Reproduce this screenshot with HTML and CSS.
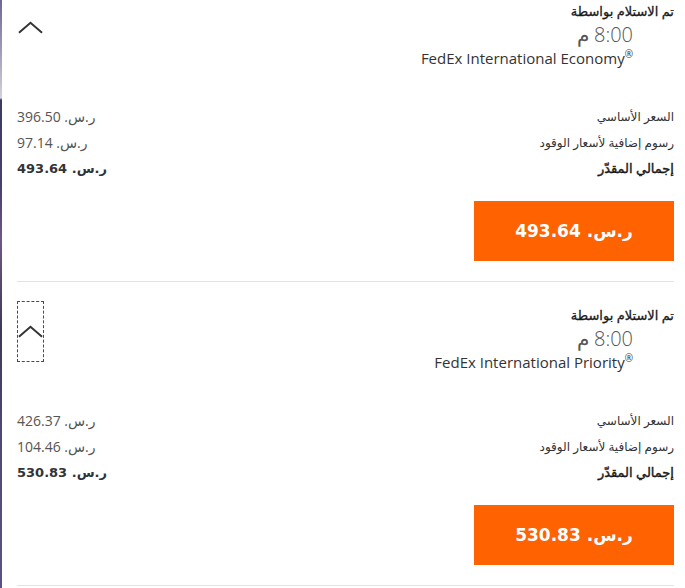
FILE: index.html
```html
<!DOCTYPE html>
<html lang="ar" dir="rtl">
<head>
    <meta charset="UTF-8">
    <meta name="viewport" content="width=device-width, initial-scale=1.0">
    <title>خيارات الشحن</title>
    <link rel="stylesheet" href="styles.css">
</head>
<body>
    <div class="rates">
        <div class="rate-card">
            <div class="rate-head">
                <div class="rate-info">
                    <div class="pickup">تم الاستلام بواسطة</div>
                    <div class="time">8:00 م</div>
                    <div class="service" dir="ltr">FedEx International Economy<sup>®</sup></div>
                </div>
                <button class="toggle" aria-label="طي">
                    <svg width="26" height="13" viewBox="0 0 26 13"><path d="M1 12 L13 1.5 L25 12" fill="none" stroke="#333" stroke-width="2"/></svg>
                </button>
            </div>
            <div class="price-list">
                <div class="price-row">
                    <span class="label">السعر الأساسي</span>
                    <span class="value">ر.س. 396.50</span>
                </div>
                <div class="price-row">
                    <span class="label">رسوم إضافية لأسعار الوقود</span>
                    <span class="value">ر.س. 97.14</span>
                </div>
                <div class="price-row total">
                    <span class="label">إجمالي المقدّر</span>
                    <span class="value">ر.س. 493.64</span>
                </div>
            </div>
            <button class="select-btn">ر.س. 493.64</button>
        </div>

        <div class="rate-card">
            <div class="rate-head">
                <div class="rate-info">
                    <div class="pickup">تم الاستلام بواسطة</div>
                    <div class="time">8:00 م</div>
                    <div class="service" dir="ltr">FedEx International Priority<sup>®</sup></div>
                </div>
                <button class="toggle focused" aria-label="طي">
                    <svg width="26" height="13" viewBox="0 0 26 13"><path d="M1 12 L13 1.5 L25 12" fill="none" stroke="#333" stroke-width="2"/></svg>
                </button>
            </div>
            <div class="price-list">
                <div class="price-row">
                    <span class="label">السعر الأساسي</span>
                    <span class="value">ر.س. 426.37</span>
                </div>
                <div class="price-row">
                    <span class="label">رسوم إضافية لأسعار الوقود</span>
                    <span class="value">ر.س. 104.46</span>
                </div>
                <div class="price-row total">
                    <span class="label">إجمالي المقدّر</span>
                    <span class="value">ر.س. 530.83</span>
                </div>
            </div>
            <button class="select-btn">ر.س. 530.83</button>
        </div>
    </div>
</body>
</html>
```

FILE: styles.css
```css
html, body {
    height: 100%;
}
body {
    margin: 0;
    overflow: hidden;
    font-family: "Open Sans", "DejaVu Sans", sans-serif;
    color: #333;
    background:
        linear-gradient(#6f6792 0, #a9a6bd 60px, #d2d2da 98px, #3b3a5c 100px, #4a416e 190px, #6d5a82 240px, #3e3858 330px, #4f4870 430px, #5b5284 588px) left top / 2px 100% no-repeat,
        #fff;
}
.rates {
    margin-top: -22px;
    padding: 0 11px 0 17px;
}
.rate-card {
    padding: 19px 0 20px;
    border-bottom: 1px solid #e3e3e3;
}
.rate-head {
    display: flex;
    justify-content: space-between;
    align-items: flex-start;
}
.rate-info {
    padding-top: 4px;
}
.pickup {
    font-size: 13px;
    line-height: 20px;
    color: #1a1a1a;
    -webkit-text-stroke: 0.3px #1a1a1a;
    text-align: right;
}
.time {
    font-size: 20px;
    line-height: 27px;
    font-weight: 300;
    color: #555;
    padding-right: 41px;
    text-align: right;
}
.service {
    font-size: 15px;
    line-height: 21px;
    padding-right: 41px;
    text-align: right;
}
.service sup {
    font-size: 10px;
    line-height: 0;
}
.toggle {
    width: 27px;
    height: 61px;
    padding: 0;
    border: 1px solid transparent;
    background: none;
    display: flex;
    align-items: center;
    justify-content: center;
    cursor: pointer;
}
.toggle.focused {
    border: 1px dashed #6224c4;
}
.price-list {
    margin-top: 34px;
}
.price-row {
    display: flex;
    justify-content: space-between;
    align-items: center;
    height: 26px;
    font-size: 12px;
}
.price-row .value {
    font-size: 14px;
    color: #555;
}
.price-row.total .label {
    font-size: 13px;
    color: #1a1a1a;
    -webkit-text-stroke: 0.4px #1a1a1a;
}
.price-row.total .value {
    font-family: "DejaVu Sans", sans-serif;
    font-size: 13px;
    font-weight: bold;
    color: #333;
}
.select-btn {
    display: block;
    width: 200px;
    height: 60px;
    margin-top: 20px;
    border: none;
    background: #ff6200;
    color: #fff;
    font-family: "DejaVu Sans", sans-serif;
    font-size: 17px;
    font-weight: bold;
    cursor: pointer;
}
```
